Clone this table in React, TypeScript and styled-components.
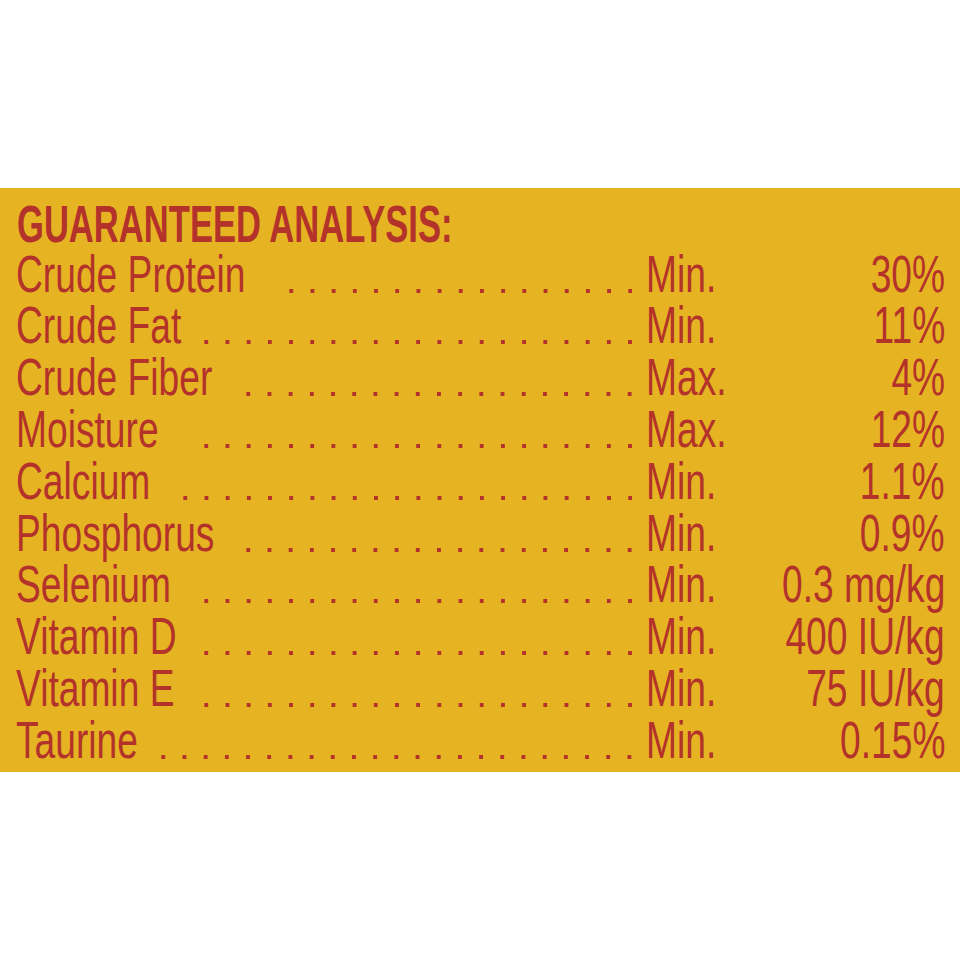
import React from 'react'
import styled, { createGlobalStyle } from 'styled-components'

const YELLOW = '#e6b423'
const RED = '#b3322a'
const DOT_STEP = 21.2

type Row = { name: string; kind: string; value: string; dots: number }

const rows: Row[] = [
  { name: 'Crude Protein', kind: 'Min.', value: '30%', dots: 17 },
  { name: 'Crude Fat', kind: 'Min.', value: '11%', dots: 21 },
  { name: 'Crude Fiber', kind: 'Max.', value: '4%', dots: 19 },
  { name: 'Moisture', kind: 'Max.', value: '12%', dots: 21 },
  { name: 'Calcium', kind: 'Min.', value: '1.1%', dots: 22 },
  { name: 'Phosphorus', kind: 'Min.', value: '0.9%', dots: 19 },
  { name: 'Selenium', kind: 'Min.', value: '0.3 mg/kg', dots: 21 },
  { name: 'Vitamin D', kind: 'Min.', value: '400 IU/kg', dots: 21 },
  { name: 'Vitamin E', kind: 'Min.', value: '75 IU/kg', dots: 21 },
  { name: 'Taurine', kind: 'Min.', value: '0.15%', dots: 23 },
]

const App: React.FC = () => {
  return (
    <Page>
      <GlobalStyle />
      <Panel>
        <Heading>
          <Squeeze $bold>GUARANTEED ANALYSIS:</Squeeze>
        </Heading>
        {rows.map((r) => (
          <Line key={r.name}>
            <Leader>
              <Label>
                <Squeeze>{r.name}</Squeeze>
              </Label>
              <Dots style={{ width: r.dots * DOT_STEP }} />
            </Leader>
            <Kind>
              <Squeeze>{r.kind}</Squeeze>
            </Kind>
            <Amount>
              <Squeeze $right>{r.value}</Squeeze>
            </Amount>
          </Line>
        ))}
      </Panel>
    </Page>
  )
}

const GlobalStyle = createGlobalStyle`
  html, body {
    margin: 0;
    padding: 0;
    background: #ffffff;
  }
`
const Page = styled.div`
  min-height: 100vh;
  display: flex;
  align-items: center;
  overflow: hidden;
`
const Panel = styled.section`
  width: 100%;
  background-color: ${YELLOW};
  padding: 11px 15px 6px 16px;
  box-sizing: border-box;
  color: ${RED};
  font-family: 'Liberation Sans', Arial, sans-serif;
  font-size: 52px;
`
// the print uses a condensed face, so the wide one is squeezed horizontally
const Squeeze = styled.span<{ $bold?: boolean; $right?: boolean }>`
  display: inline-block;
  flex: none;
  white-space: nowrap;
  font-weight: ${(p) => (p.$bold ? 700 : 400)};
  transform: scaleX(${(p) => (p.$bold ? 0.665 : 0.715)});
  transform-origin: ${(p) => (p.$right ? 'right' : 'left')} center;
`
const Heading = styled.h1`
  margin: 0;
  padding-left: 1px;
  font-size: 52px;
  line-height: 50px;
  font-weight: 700;
`
const Line = styled.div`
  display: flex;
  line-height: 51.8px;
  height: 51.8px;
`
const Leader = styled.div`
  flex: none;
  width: 616px;
  display: grid;
`
const Label = styled.div`
  grid-area: 1 / 1;
`
const Dots = styled.div`
  grid-area: 1 / 1;
  justify-self: end;
  align-self: start;
  margin-top: 40px;
  height: 4px;
  background-image: linear-gradient(
    to right,
    transparent ${DOT_STEP - 4}px,
    ${RED} ${DOT_STEP - 4}px
  );
  background-size: ${DOT_STEP}px 4px;
  background-repeat: repeat-x;
`
const Kind = styled.div`
  flex: none;
  width: 134px;
  margin-left: 14px;
`
const Amount = styled.div`
  flex: 1;
  min-width: 0;
  display: flex;
  justify-content: flex-end;
`

export default App
